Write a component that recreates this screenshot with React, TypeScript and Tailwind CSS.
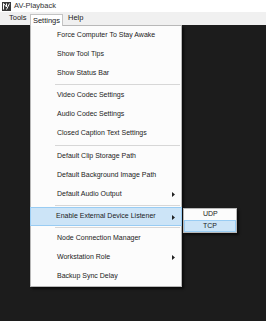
import React from "react";

const font = { fontFamily: '"Liberation Sans", Arial, sans-serif' };

type Entry =
  | { kind: "item"; label: string; arrow?: boolean; active?: boolean }
  | { kind: "sep"; h: string };

const entries: Entry[] = [
  { kind: "item", label: "Force Computer To Stay Awake" },
  { kind: "item", label: "Show Tool Tips" },
  { kind: "item", label: "Show Status Bar" },
  { kind: "sep", h: "h-[3px]" },
  { kind: "item", label: "Video Codec Settings" },
  { kind: "item", label: "Audio Codec Settings" },
  { kind: "item", label: "Closed Caption Text Settings" },
  { kind: "sep", h: "h-[4px]" },
  { kind: "item", label: "Default Clip Storage Path" },
  { kind: "item", label: "Default Background Image Path" },
  { kind: "item", label: "Default Audio Output", arrow: true },
  { kind: "sep", h: "h-[3px]" },
  { kind: "item", label: "Enable External Device Listener", arrow: true, active: true },
  { kind: "sep", h: "h-[3px]" },
  { kind: "item", label: "Node Connection Manager" },
  { kind: "item", label: "Workstation Role", arrow: true },
  { kind: "item", label: "Backup Sync Delay" },
];

function Arrow() {
  return (
    <svg width="3" height="5" viewBox="0 0 3 5" className="absolute right-[6px] top-[7px]">
      <path d="M0 0 L3 2.5 L0 5 Z" fill="#222" />
    </svg>
  );
}

export default function App() {
  return (
    <div className="w-[266px] h-[321px] flex flex-col overflow-hidden text-[7px] text-[#1b1b1b]" style={font}>
      <div className="h-[12px] bg-white flex items-center pl-[2px] shrink-0">
        <svg width="9" height="9" viewBox="0 0 9 9">
          <rect x="0" y="0" width="9" height="9" fill="#3a3a3a" />
          <path d="M1.5 7.5 L1.5 1.5 L4.5 5 L4.5 1.5 M4.5 7.5 L7.5 1.5" stroke="#fff" strokeWidth="1" fill="none" />
        </svg>
        <span className="ml-[3px] text-[#333] text-[7.5px]">AV-Playback</span>
      </div>
      <div className="h-[13px] bg-[#f0f0f0] flex items-end shrink-0 relative z-20 text-[7.5px]">
        <div className="h-[12px] w-[30px] flex items-center pl-[9px] mb-[1px]">Tools</div>
        <div className="h-[12px] w-[33px] flex items-center justify-center bg-white border-x border-t border-[#c4c4c4] mb-[-1px] relative z-20">
          Settings
        </div>
        <div className="h-[12px] flex items-center pl-[5px] mb-[1px]">Help</div>
      </div>
      <div className="flex-1 relative bg-[#1c1c1c] bg-[radial-gradient(#2a2a2a_0.6px,transparent_0.6px)] bg-[length:2px_2px]">
        <div className="absolute left-[30px] top-0 w-[152px] h-[262px] bg-[#fcfcfc] border border-[#b8b8b8] shadow-[2px_2px_2px_rgba(0,0,0,0.6)] z-10 flex flex-col">
          {entries.map((e, i) =>
            e.kind === "sep" ? (
              <div key={i} className={`${e.h} flex items-center pl-[24px] pr-[1px]`}>
                <div className="h-[1px] w-full bg-[#d7d7d7]" />
              </div>
            ) : (
              <div
                key={i}
                className={
                  e.active
                    ? "h-[19px] relative flex items-center pl-[25px] bg-[#cce4f7] border border-[#99ccf3] mx-[-1px]"
                    : "h-[19px] relative flex items-center pl-[26px]"
                }
              >
                <span>{e.label}</span>
                {e.arrow && <Arrow />}
              </div>
            )
          )}
        </div>
        <div className="absolute left-[183px] top-[183px] w-[54px] h-[25px] bg-[#fcfcfc] border border-[#b8b8b8] shadow-[2px_2px_2px_rgba(0,0,0,0.6)] z-10 flex flex-col">
          <div className="h-[12px] flex items-center pl-[19px]">UDP</div>
          <div className="h-[12px] flex items-center pl-[18px] bg-[#cce4f7] border border-[#99ccf3]">TCP</div>
        </div>
      </div>
    </div>
  );
}
